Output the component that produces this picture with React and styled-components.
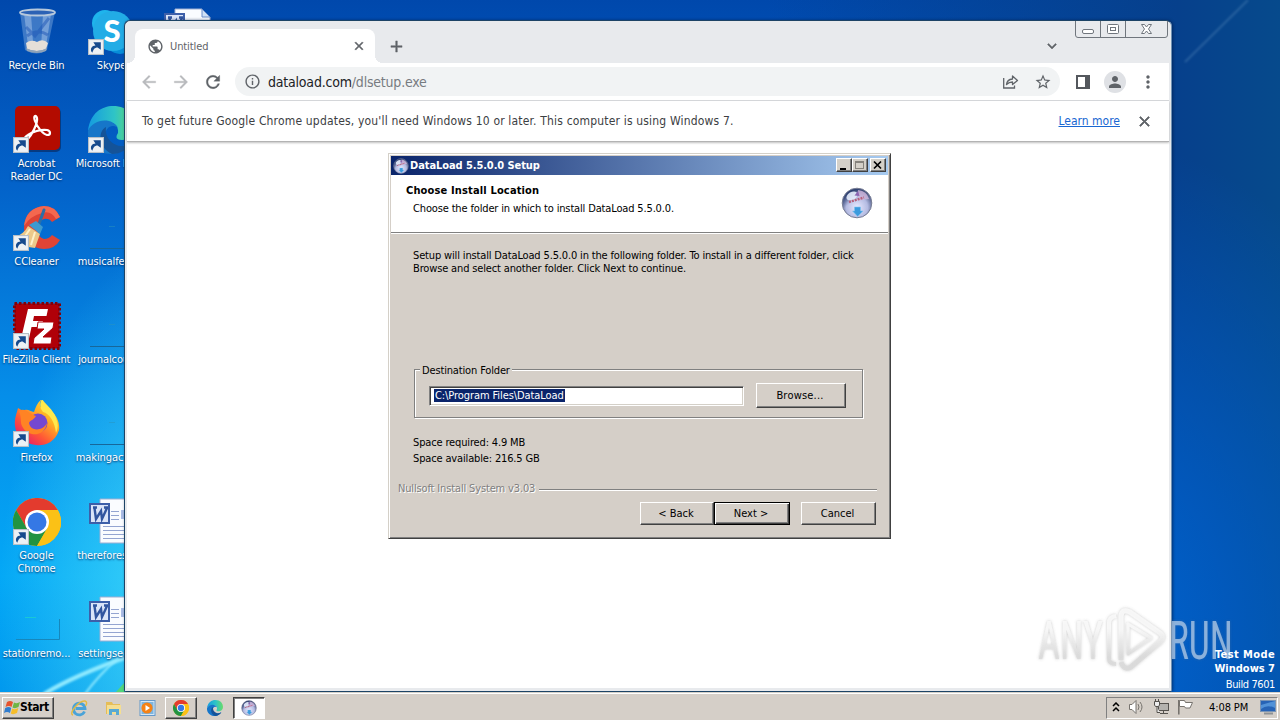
import React from 'react'
import styled, { createGlobalStyle, css } from 'styled-components'
import {
	MdAdd, MdArrowBack, MdArrowForward, MdClose, MdInfoOutline, MdKeyboardArrowDown,
	MdMoreVert, MdPerson, MdPublic, MdRefresh, MdStarBorder,
} from 'react-icons/md'

const desktopItems = [
	{ label: 'Recycle Bin', icon: 'bin' },
	{ label: 'Acrobat Reader DC', icon: 'acrobat', shortcut: true },
	{ label: 'CCleaner', icon: 'ccleaner', shortcut: true },
	{ label: 'FileZilla Client', icon: 'filezilla', shortcut: true },
	{ label: 'Firefox', icon: 'firefox', shortcut: true },
	{ label: 'Google Chrome', icon: 'chrome', shortcut: true },
	{ label: 'stationremo...', icon: 'blank' },
	{ label: 'Skype', icon: 'skype', shortcut: true },
	{ label: 'Microsoft Edge', icon: 'edge', shortcut: true, nowrap: true },
	{ label: 'musicalfesti...', icon: 'line' },
	{ label: 'journalcouri...', icon: 'line' },
	{ label: 'makingactivi...', icon: 'line' },
	{ label: 'thereforesta...', icon: 'word' },
	{ label: 'settingsedit...', icon: 'word' },
	{ label: '', icon: 'word' },
]

function BinIcon() {
	return (
		<svg viewBox='0 0 48 48'>
			<path d='M7 4 L12 42 Q24 49 34 42 L42 4 Z' fill='#6f9fd8' fillOpacity='.55' />
			<path d='M11 5 L15 38 L20 34 L18 6 Z M30 6 L28 40 L33 38 L38 6 Z' fill='#d9e8f8' fillOpacity='.35' />
			<path d='M13 19 L22 28 L36 10 M14 28 Q25 20 35 27' stroke='#1d56b5' strokeOpacity='.5' strokeWidth='3' fill='none' />
			<path d='M13 35 Q18 31 24 34 Q30 30 35 35 L33 41 Q24 45 14 41Z' fill='#e5dfd8' />
			<path d='M13 40 Q24 46 34 40 L33 43 Q24 47 14 43Z' fill='#8fa3b8' />
			<ellipse cx='24.5' cy='4.5' rx='17.5' ry='3' fill='#2c62b5' stroke='#b6c8dc' strokeWidth='1.8' />
		</svg>
	)
}

function AcrobatIcon() {
	return (
		<svg viewBox='0 0 48 48'>
			<rect x='3' y='2' width='45' height='44' rx='5' fill='#063b82' />
			<rect x='2' y='0' width='45' height='44' rx='5' fill='#b30b00' />
			<path d='M14 34 C19 29 25 17 24 12 C23 8 20 10 22 15 C24 21 30 28 34 29 C38 29 38 25 34 24 C28 23 19 26 15 29 C10 32 11 36 14 34Z' fill='none' stroke='#fff' strokeWidth='2.2' />
		</svg>
	)
}

function CCleanerIcon() {
	return (
		<svg viewBox='0 0 48 48'>
			<path d='M47 13 L39 18 Q36 14 31 15 Q24 17 24 26 Q25 33 31 35 Q36 35 39 31 L47 36 Q42 45 31 45 Q12 44 11 24 Q12 4 31 2 Q42 2 47 13Z' fill='#df4435' />
			<path d='M11 22 Q13 4 31 2 Q42 2 47 13 L43 15 Q38 6 29 9 Q17 12 11 22Z' fill='#f4684f' />
			<path d='M31 6 L26 20' stroke='#2a6fa8' strokeWidth='3' strokeLinecap='round' />
			<path d='M16 21 L23 17 L30 23 L27 30Z' fill='#3c9ad0' />
			<path d='M15 22 L27 30 L22 44 Q10 44 2 33 Q11 30 15 22Z' fill='#ecc98a' />
			<path d='M17 25 L10 35 M22 28 L18 41' stroke='#fff1c8' strokeWidth='2' />
		</svg>
	)
}

function FileZillaIcon() {
	return (
		<svg viewBox='0 0 48 48'>
			<rect x='1.5' y='1.5' width='45' height='45' fill='#b00008' stroke='#810008' strokeWidth='3' strokeDasharray='2.5 2' />
			<path d='M15 7 L35 7 L33.5 14 L21 14 L20 19 L30 19 L28.5 25 L18.5 25 L15 41 L7 41Z' fill='#fff' />
			<path d='M25 20 L41 20 L40 26 L30 35 L39 35 L38 42 L20 42 L21 36 L31 27 L24 27Z' fill='#fff' stroke='#b00008' strokeWidth='1' />
		</svg>
	)
}

function FirefoxIcon() {
	return (
		<svg viewBox='0 0 48 48'>
			<defs>
				<linearGradient id='fox' x1='1' y1='0' x2='.2' y2='1'>
					<stop offset='0' stopColor='#fff33f' />
					<stop offset='.4' stopColor='#ffae24' />
					<stop offset='.7' stopColor='#ff5636' />
					<stop offset='1' stopColor='#e51572' />
				</linearGradient>
			</defs>
			<g transform='translate(0 -2)'>
				<path d='M29 1 C25 7 27 9 32 13 L36 11 C44 17 47 25 46 32 C42 45 31 48 23 47 C11 46 3 38 2 28 C1 20 4 15 5 10 L10 13 C14 10 17 13 21 14 C23 8 25 4 29 1Z' fill='url(#fox)' />
				<circle cx='25' cy='25' r='9.5' fill='#7548d0' />
				<path d='M6 13 C12 9 16 16 23 18 C21 22 17 22 16 25 C18 35 31 32 34 25 C32 39 15 40 9 28 C7 24 9 20 6 13Z' fill='#ff8324' />
				<path d='M29 1 C34 8 42 13 44 23 Q46 29 43 35 C42 24 36 15 30 14 Q25 8 29 1Z' fill='#ffe84c' />
			</g>
		</svg>
	)
}

function ChromeIcon() {
	return (
		<svg viewBox='0 0 48 48'>
			<circle cx='24' cy='24' r='24' fill='#fbc116' />
			<path d='M24 12 H44.8 A24 24 0 0 0 3.2 12 L13.5 30Z' fill='#e33b2e' />
			<path d='M3.2 12 L13.6 30 L34.4 30 L24 48 A24 24 0 0 1 3.2 12Z' fill='#229342' />
			<path d='M34.4 30 L24 48 A24 24 0 0 0 44.8 12 H24Z' fill='#fbc116' />
			<circle cx='24' cy='24' r='12' fill='#fff' />
			<circle cx='24' cy='24' r='9.5' fill='#3578e5' />
		</svg>
	)
}

function SkypeIcon() {
	return (
		<svg viewBox='0 0 48 48'>
			<circle cx='17' cy='15' r='13' fill='#1fb4ec' />
			<circle cx='32' cy='31' r='15' fill='#078dd8' />
			<circle cx='25' cy='23' r='20' fill='#22ace6' />
			<text x='15.5' y='34' fontFamily='Lato, sans-serif' fontWeight='900' fontSize='31' fill='#fff'>S</text>
		</svg>
	)
}

function EdgeIcon() {
	return (
		<svg viewBox='0 0 48 48'>
			<defs>
				<linearGradient id='edgeTop' x1='0' x2='1'>
					<stop offset='0' stopColor='#159be0' />
					<stop offset='.55' stopColor='#2fc4c6' />
					<stop offset='1' stopColor='#69dc67' />
				</linearGradient>
			</defs>
			<path d='M0 25 C2 7 14 0 25 0 C40 0 48 10 48 21 C48 29 42 34 34 34 C27 34 28 30 30 27 C31 19 25 16 18 16 C9 16 3 20 0 25Z' fill='url(#edgeTop)' />
			<path d='M0 25 C5 12 25 11 30 22 C22 16 15 25 18 33 C21 41 31 44 43 36 C38 44 31 48 23 48 C8 48 -1 36 0 25Z' fill='#1676c9' />
			<path d='M18 21 C9 26 11 42 24 48 C33 48 40 43 43 37 C32 45 16 36 18 21Z' fill='#145399' />
		</svg>
	)
}

function WordIcon() {
	return (
		<svg viewBox='0 0 48 48'>
			<path d='M12 1 H39 L47 9 V45 H12Z' fill='#fafcff' stroke='#9daed2' />
			<path d='M39 1 V9 H47Z' fill='#cfe0f5' stroke='#6a8cc8' />
			<path d='M23 13.5 H31 M23 17.5 H31 M23 21.5 H31 M15 28.5 H44 M15 32.5 H44 M15 36.5 H44 M15 40.5 H44' stroke='#94a5d1' />
			<rect x='33' y='12' width='10' height='9' fill='#aabce5' />
			<rect x='2' y='6' width='19' height='19' fill='#dae4f8' stroke='#3d5fa9' strokeWidth='2' />
			<path d='M5 9.5 H9 M6.5 10 L8 21 L13 13 L14 21 L19 10 M16 9.5 H20' fill='none' stroke='#31559f' strokeWidth='2.4' />
		</svg>
	)
}

function BlankIcon() {
	return (
		<svg viewBox='0 0 48 48'>
			<path d='M3 43.5 H46.5 V23' fill='none' stroke='#1687bc' />
			<path d='M12 21.5 H23' stroke='#19c8d6' />
		</svg>
	)
}

function LineIcon() {
	return (
		<svg viewBox='0 0 48 48'>
			<path d='M2 44.5 H48' stroke='#17679a' />
			<path d='M21 22.5 H27' stroke='#2a94bc' strokeOpacity='.5' />
		</svg>
	)
}

// glass disc used by the installer title, header and task button
function DiscIcon() {
	return (
		<svg viewBox='0 0 32 32'>
			<defs>
				<radialGradient id='disc' cx='.5' cy='.65' r='.6'>
					<stop offset='0' stopColor='#e8e9ff' />
					<stop offset='.6' stopColor='#b4bbe2' />
					<stop offset='1' stopColor='#414e7b' />
				</radialGradient>
				<linearGradient id='discRim' x1='0' y1='0' x2='.6' y2='.7'>
					<stop offset='0' stopColor='#10295c' />
					<stop offset='.6' stopColor='#25396e' stopOpacity='0' />
				</linearGradient>
			</defs>
			<circle cx='16' cy='16' r='14.8' fill='url(#disc)' stroke='#777d94' />
			<circle cx='16' cy='16' r='14' fill='url(#discRim)' />
			<ellipse cx='11' cy='9' rx='6' ry='4' fill='#e4ebfb' fillOpacity='.9' transform='rotate(-30 11 9)' />
			<path d='M17 3 Q26 4 28 12 Q23 12 17 14Z' fill='#d0b6dc' fillOpacity='.8' />
			<path d='M8 15 L23 10.5' stroke='#b5607b' strokeWidth='2.4' strokeDasharray='2 1' />
			<path d='M13.5 8.5 L17 4 L18.5 9Z' fill='#8b63b0' />
			<path d='M13.5 20 H19.5 V24 H22 L16.7 29.5 L11.5 24 H13.5Z' fill='#3a9add' stroke='#7fc4f0' strokeWidth='.6' />
		</svg>
	)
}

function ShortcutArrow() {
	return (
		<svg viewBox='0 0 15 15'>
			<rect x='.5' y='.5' width='14' height='14' fill='#edf1f5' stroke='#b7bfc7' />
			<path d='M4 13 C1 9 4 6 7 6 L5 3 L12 3 L12 10 L9 8 C6 8 5 10 4 13Z' fill='#164a8d' />
		</svg>
	)
}

const icons = {
	bin: BinIcon, acrobat: AcrobatIcon, ccleaner: CCleanerIcon, filezilla: FileZillaIcon,
	firefox: FirefoxIcon, chrome: ChromeIcon, skype: SkypeIcon, edge: EdgeIcon,
	word: WordIcon, blank: BlankIcon, line: LineIcon,
}

function DesktopItem({ item }) {
	const Icon = icons[item.icon]
	return (
		<Shortcut>
			<ShortcutImage>
				<Icon />
				{item.shortcut && <ArrowBadge><ShortcutArrow /></ArrowBadge>}
			</ShortcutImage>
			<ShortcutLabel $nowrap={item.nowrap}>{item.label}</ShortcutLabel>
		</Shortcut>
	)
}

function Wallpaper() {
	return (
		<WallpaperSvg viewBox='0 0 1280 720' preserveAspectRatio='none'>
			<defs>
				<filter id='soft'><feGaussianBlur stdDeviation='1.2' /></filter>
			</defs>
			<path d='M44 694 Q75 675 130 656' stroke='#8feaff' strokeWidth='4' fill='none' filter='url(#soft)' />
			<path d='M85 694 Q98 676 118 658' stroke='#8feaff' strokeWidth='2' fill='none' filter='url(#soft)' />
			<path d='M116 692 L124 683 V692Z' fill='#51d67b' />
			<path d='M1185 62 L1248 0' stroke='#6694c4' strokeOpacity='.35' strokeWidth='2' filter='url(#soft)' />
		</WallpaperSvg>
	)
}

function Browser() {
	return (
		<BrowserWindow>
			<TabStrip>
				<Tab>
					<MdPublic size={17} />
					<TabTitle>Untitled</TabTitle>
					<Strong><MdClose size={14} /></Strong>
				</Tab>
				<NewTab><MdAdd size={19} /></NewTab>
				<TabSearch><MdKeyboardArrowDown size={18} /></TabSearch>
				<WindowButtons>
					<svg width='93' height='18' viewBox='0 0 93 18' fill='none' stroke='#70767d'>
						<path d='M.5 0 V14 Q.5 16.5 3 16.5 H90 Q92.5 16.5 92.5 14 V0 M25.5 0 V16 M50.5 0 V16' />
						<rect x='7.5' y='8.5' width='11' height='4' rx='1.5' fill='#fff' />
						<rect x='32.5' y='3.5' width='11' height='9' rx='1' fill='#fff' />
						<rect x='35.5' y='6.5' width='5' height='3' />
						<path d='M66.5 3.5 H69.5 L71.5 6 L73.5 3.5 H76.5 L73.5 8 L76.5 12.5 H73.5 L71.5 10 L69.5 12.5 H66.5 L69.5 8Z' fill='#fff' />
					</svg>
				</WindowButtons>
			</TabStrip>
			<Toolbar>
				<NavButton $muted><MdArrowBack size={20} /></NavButton>
				<NavButton $muted><MdArrowForward size={20} /></NavButton>
				<NavButton><MdRefresh size={20} /></NavButton>
				<Omnibox>
					<MdInfoOutline size={17} />
					<Address>dataload.com<span>/dlsetup.exe</span></Address>
					<svg width='17' height='16' viewBox='0 0 17 16' fill='none' stroke='#5f6368' strokeWidth='1.3'>
						<path d='M1.7 4 V14 H12.5 V11.5' />
						<path d='M4.5 10.5 Q5 5.5 10.5 5 V2 L15.5 6.4 L10.5 10.5 V8 Q7 8 4.5 10.5Z' strokeLinejoin='round' />
					</svg>
					<MdStarBorder size={18} />
				</Omnibox>
				<PanelButton>
					<svg width='14' height='14' viewBox='0 0 14 14'><path d='M0 0H14V14H0Z M2 2V12H9V2Z' fill='#54585d' fillRule='evenodd' /></svg>
				</PanelButton>
				<Avatar><MdPerson size={18} /></Avatar>
				<MdMoreVert size={20} />
			</Toolbar>
			<InfoBar>
				<InfoText>To get future Google Chrome updates, you'll need Windows 10 or later. This computer is using Windows 7.</InfoText>
				<LearnMore>Learn more</LearnMore>
				<Strong><MdClose size={17} /></Strong>
			</InfoBar>
			<Page />
		</BrowserWindow>
	)
}

function Installer() {
	return (
		<Dialog>
			<TitleBar>
				<TitleIcon><DiscIcon /></TitleIcon>
				<Title>DataLoad 5.5.0.0 Setup</Title>
				<CaptionButton>
					<svg width='12' height='11' viewBox='0 0 12 11'><path d='M2 9H8' stroke='#000' strokeWidth='2' /></svg>
				</CaptionButton>
				<CaptionButton>
					<svg width='12' height='11' viewBox='0 0 12 11'><rect x='1.5' y='1.5' width='8' height='7' fill='none' stroke='#85827c' /><path d='M1 2H10' stroke='#85827c' strokeWidth='2' /></svg>
				</CaptionButton>
				<CaptionButton $apart>
					<svg width='12' height='11' viewBox='0 0 12 11'><path d='M2 1.5L9 8.5M9 1.5L2 8.5' stroke='#000' strokeWidth='1.7' /></svg>
				</CaptionButton>
			</TitleBar>
			<DialogHeader>
				<div>
					<Heading>Choose Install Location</Heading>
					<SubHeading>Choose the folder in which to install DataLoad 5.5.0.0.</SubHeading>
				</div>
				<HeaderIcon><DiscIcon /></HeaderIcon>
			</DialogHeader>
			<DialogBody>
				<Description>
					<div>Setup will install DataLoad 5.5.0.0 in the following folder. To install in a different folder, click</div>
					<div>Browse and select another folder. Click Next to continue.</div>
				</Description>
				<Group>
					<Legend>Destination Folder</Legend>
					<PathField><Selected>C:\Program Files\DataLoad</Selected></PathField>
					<Button $width={90} $height={25} $spacing='0.2px'>Browse...</Button>
				</Group>
				<Space>
					<div>Space required: 4.9 MB</div>
					<div>Space available: 216.5 GB</div>
				</Space>
				<Branding>Nullsoft Install System v3.03<Rule /></Branding>
				<Actions>
					<Button $width={74} $height={23}>&lt; Back</Button>
					<Button $width={76} $height={23} $primary>Next &gt;</Button>
					<Button $width={75} $height={23} $apart>Cancel</Button>
				</Actions>
			</DialogBody>
		</Dialog>
	)
}

function WindowsLogo() {
	return (
		<svg width='16' height='15' viewBox='0 0 16 15'>
			<path d='M3 2 Q6 0 9 2 L7.5 7 Q5 5 1.5 7Z' fill='#e7532d' />
			<path d='M10 2.5 Q13 4 16 2 L14.5 7 Q11 9 8.5 7.5Z' fill='#70b544' />
			<path d='M1.2 8 Q5 6 7.2 8 L6 13 Q3 11 0 13Z' fill='#317dce' />
			<path d='M8.2 8.5 Q11 10 14.3 8 L13 13 Q9 15 6.8 13.5Z' fill='#f6bd29' />
		</svg>
	)
}

function Taskbar() {
	return (
		<Bar>
			<StartButton><WindowsLogo />Start</StartButton>
			<LaunchItem>
				<svg width='18' height='18' viewBox='0 0 18 18' fill='none'>
					<path d='M14.5 12.5 A5.8 5.8 0 1 1 15 9.5 H5.5' stroke='#4aa3d8' strokeWidth='2.8' />
					<path d='M3 16 C-2 15 9 1 15 2 Q18 3 15.5 7' stroke='#e3ba42' strokeWidth='1.4' />
				</svg>
			</LaunchItem>
			<LaunchItem>
				<svg width='17' height='16' viewBox='0 0 17 16'>
					<path d='M1 2H7L8 4H15V14H1Z' fill='#e5bd56' />
					<path d='M2 5H16V14H2Z' fill='#f5de91' />
					<path d='M4 9H14V15H11V12H7V15H4Z' fill='#59a9d3' />
				</svg>
			</LaunchItem>
			<LaunchItem>
				<svg width='17' height='16' viewBox='0 0 17 16'>
					<rect x='1' y='.5' width='15' height='15' fill='#d4e7f7' stroke='#6599ca' />
					<rect x='2.5' y='2' width='12' height='12' fill='#7db5df' />
					<circle cx='8' cy='8' r='5.6' fill='#f58216' />
					<path d='M6.5 5V11L11 8Z' fill='#fff' />
				</svg>
			</LaunchItem>
			<TaskButton><TaskImage><ChromeIcon /></TaskImage></TaskButton>
			<LaunchItem $wide><TaskImage><EdgeIcon /></TaskImage></LaunchItem>
			<TaskButton $active><TaskImage><DiscIcon /></TaskImage></TaskButton>
			<Tray>
				<svg width='8' height='11' viewBox='0 0 8 11' fill='none' stroke='#000' strokeWidth='1.5'><path d='M1 4L4 1L7 4M1 9L4 6L7 9' /></svg>
				<svg width='17' height='16' viewBox='0 0 17 16' fill='#fff' stroke='#77736e'>
					<path d='M1.5 5.5H4L8 1.5V14.5L4 10.5H1.5Z' />
					<path d='M10 5Q12 8 10 11M12 3Q16 8 12 13' fill='none' />
				</svg>
				<svg width='17' height='16' viewBox='0 0 17 16' fill='#eee' stroke='#55524e'>
					<rect x='5.5' y='4.5' width='10' height='7' fill='#b4b2ae' />
					<path d='M7 14.5H15M10.5 12V14' />
					<path d='M1.5 2.5H6.5V6L5.5 7.5H2.5L1.5 6ZM2.5 2V0M5.5 2V0M4 8V13.5H7' />
				</svg>
				<svg width='17' height='16' viewBox='0 0 17 16' fill='#fff' stroke='#77736e'>
					<path d='M.8 15.5V1' fill='none' strokeWidth='1.6' />
					<path d='M1.5 1.5H6.5L7.5 3.5H14.5L12 9H7.5L6.5 7.5H1.5Z' />
				</svg>
				<Clock>4:08 PM</Clock>
				<svg width='17' height='15' viewBox='0 0 17 15'>
					<rect x='.5' y='.5' width='15' height='11' fill='#2663b6' stroke='#7994b6' />
					<path d='M1 5L15 1V8Q7 4 1 9Z' fill='#5292d8' />
					<path d='M4 13.5H13' stroke='#8d9195' strokeWidth='2' />
				</svg>
			</Tray>
		</Bar>
	)
}

function Watermark() {
	return (
		<WatermarkSvg width='210' height='76' viewBox='0 0 210 76'>
			<defs>
				<filter id='mark' x='-10%' y='-10%' width='120%' height='120%'>
					<feDropShadow dx='0' dy='0' stdDeviation='1.6' floodColor='#777' floodOpacity='.45' />
				</filter>
				<linearGradient id='fade' gradientUnits='userSpaceOnUse' x1='0' y1='8' x2='0' y2='70'>
					<stop offset='.3' stopColor='#fafafa' stopOpacity='.9' />
					<stop offset='.75' stopColor='#dadada' stopOpacity='.85' />
				</linearGradient>
			</defs>
			<g filter='url(#mark)' fontFamily='Roboto, sans-serif' fontSize='53' fontWeight='400'>
				<text x='8' y='57' fill='url(#fade)' textLength='65' lengthAdjust='spacingAndGlyphs'>ANY</text>
				<text x='139' y='57' fill='#cfdff0' fillOpacity='.62' textLength='64' lengthAdjust='spacingAndGlyphs'>RUN</text>
				<g fill='none' stroke='url(#fade)' strokeLinejoin='round'>
					<path d='M86 14 Q79 15 79 21 V57 Q79 62 86 62' strokeWidth='4' />
					<path d='M91 58 V14 Q92 6 100 10 L130 31 Q135 35 130 40 L101 65 Q94 69 91 60' strokeWidth='5' />
					<path d='M98 22 V52 L121 36 Z' strokeWidth='3' />
				</g>
			</g>
		</WatermarkSvg>
	)
}

function App() {
	return (
		<Desktop>
			<GlobalStyle />
			<Wallpaper />
			<ShortcutGrid>
				{desktopItems.map((item, index) => <DesktopItem key={index} item={item} />)}
			</ShortcutGrid>
			<Browser />
			<Installer />
			<Watermark />
			<BuildInfo>
				<b>Test Mode</b>
				<b>Windows 7</b>
				<span>Build 7601</span>
			</BuildInfo>
			<Taskbar />
		</Desktop>
	)
}

export default App

// the Material icons carry an empty bounding path that must stay unstroked
const thicker = width => css`
	svg path:not([fill='none']) {
		stroke: currentColor;
		stroke-width: ${width};
	}
`
const GlobalStyle = createGlobalStyle`
	* {
		box-sizing: border-box;
	}
	body {
		margin: 0;
		overflow: hidden;
		font-family: Tahoma, 'DejaVu Sans Condensed', 'DejaVu Sans', sans-serif;
		font-stretch: condensed;
		font-size: 11px;
		color: #000;
	}
	svg {
		display: block;
		flex-shrink: 0;
	}
`
const Desktop = styled.main`
	position: relative;
	display: flex;
	flex-direction: column;
	justify-content: space-between;
	width: 1280px;
	height: 720px;
	overflow: hidden;
	background:
		radial-gradient(ellipse 240px 480px at 190px 620px, rgba(90, 235, 250, 0.75), transparent 80%),
		radial-gradient(ellipse 420px 560px at 1080px 640px, rgba(0, 106, 218, 0.95), rgba(0, 96, 204, 0.75) 35%, transparent 90%),
		linear-gradient(90deg, transparent 60%, #06408c 92%, #064a8c 100%),
		linear-gradient(180deg, #0048ac 0%, #0363ca 26%, #058ee9 55%, #04a8f6 80%, #0095ec 100%);
`
const WallpaperSvg = styled.svg`
	position: absolute;
	inset: 0;
	width: 1280px;
	height: 720px;
`
const ShortcutGrid = styled.div`
	display: grid;
	grid-template-rows: repeat(7, 98px);
	grid-auto-columns: 75px;
	grid-auto-flow: column;
	height: 692px;
	margin-left: -1px;
`
const Shortcut = styled.div`
	position: relative;
	display: flex;
	flex-direction: column;
	align-items: center;
	padding: 8px 1px 0;
	gap: 3px;
`
const ShortcutImage = styled.div`
	position: relative;
	width: 48px;
	height: 48px;
`
const ArrowBadge = styled.div`
	position: absolute;
	left: 0;
	bottom: 1px;
	width: 16px;
`
const ShortcutLabel = styled.div`
	color: white;
	line-height: 13px;
	letter-spacing: -0.1px;
	text-align: center;
	text-shadow: 0 1px 2px #00306b;
	white-space: ${({ $nowrap }) => ($nowrap ? 'nowrap' : 'normal')};
`
const BrowserWindow = styled.section`
	position: absolute;
	left: 124px;
	top: 20px;
	width: 1048px;
	height: 672px;
	display: flex;
	flex-direction: column;
	padding: 0 2px 3px;
	background: #e8eaed;
	border: 1px solid #1d4466;
	border-right-color: #6f91b3;
	border-radius: 6px 6px 2px 2px;
	box-shadow: 1px 0 3px rgba(0, 25, 70, 0.6);
	color: #5f6368;
`
const TabStrip = styled.div`
	display: flex;
	height: 42px;
	padding-left: 8px;
	align-items: flex-end;
`
const Tab = styled.div`
	position: relative;
	display: flex;
	align-items: center;
	width: 240px;
	height: 34px;
	padding: 0 9px 0 12px;
	background: white;
	border-radius: 8px 8px 0 0;
	&::before, &::after {
		content: '';
		position: absolute;
		bottom: 0;
		width: 8px;
		height: 8px;
	}
	&::before {
		left: -8px;
		background: radial-gradient(circle at 0 0, transparent 8px, white 8px);
	}
	&::after {
		right: -8px;
		background: radial-gradient(circle at 100% 0, transparent 8px, white 8px);
	}
`
const TabTitle = styled.div`
	flex: 1;
	padding-left: 6px;
	font-size: 11px;
	letter-spacing: -0.1px;
`
const Strong = styled.div`
	${thicker(1)}
`
const NewTab = styled.div`
	display: flex;
	align-items: center;
	height: 34px;
	margin-left: 12px;
	${thicker(0.6)}
`
const TabSearch = styled.div`
	display: flex;
	align-items: center;
	height: 34px;
	margin-left: auto;
	${thicker(0.6)}
`
const WindowButtons = styled.div`
	align-self: flex-start;
	margin-left: 14px;
	margin-right: 1px;
`
const Toolbar = styled.div`
	display: flex;
	align-items: center;
	height: 38px;
	padding: 0 11px 0 12px;
	background: white;
	border-bottom: 1px solid #d8dadd;
`
const NavButton = styled.div`
	display: flex;
	width: 32px;
	color: ${({ $muted }) => ($muted ? '#b8babd' : '#5f6368')};
	${thicker(0.4)}
`
const Omnibox = styled.div`
	display: flex;
	align-items: center;
	flex-shrink: 0;
	width: 825px;
	height: 29px;
	padding: 0 8px 0 9px;
	background: #f1f3f4;
	border-radius: 15px;
	svg + svg {
		margin-left: 15px;
	}
`
const Address = styled.div`
	flex: 1;
	padding-left: 7px;
	color: #202124;
	font-size: 14px;
	letter-spacing: -0.2px;
	span {
		color: #777b80;
	}
`
const PanelButton = styled.div`
	margin-left: 16px;
`
const Avatar = styled.div`
	display: flex;
	align-items: center;
	justify-content: center;
	width: 22px;
	height: 22px;
	margin: 0 12px 0 14px;
	border-radius: 50%;
	background: #dfe1e5;
`
const InfoBar = styled.div`
	display: flex;
	align-items: center;
	height: 41px;
	padding: 0 16px 0 15px;
	background: white;
	border-bottom: 1px solid #b3b3b3;
	box-shadow: 0 1px 2px rgba(0, 0, 0, 0.25);
	z-index: 1;
`
const InfoText = styled.div`
	flex: 1;
	font-size: 12px;
	letter-spacing: 0.175px;
	color: #3c4043;
`
const LearnMore = styled.a`
	margin-right: 16px;
	color: #1967d2;
	font-size: 12px;
	text-decoration: underline;
`
const Page = styled.div`
	flex: 1;
	background: white;
`
const Dialog = styled.section`
	position: absolute;
	left: 388px;
	top: 153px;
	width: 503px;
	height: 386px;
	display: flex;
	flex-direction: column;
	padding: 1px;
	background: #d5cfc8;
	border: 1px solid;
	border-color: #d4d0c8 #404040 #404040 #d4d0c8;
	box-shadow: inset 1px 1px #fff, inset -1px -1px #808080;
	letter-spacing: -0.15px;
`
const TitleBar = styled.div`
	display: flex;
	align-items: center;
	height: 19px;
	margin: 1px 1px 0;
	padding: 0 2px;
	background: linear-gradient(90deg, #0a246a, #a6caf0);
`
const TitleIcon = styled.div`
	width: 16px;
`
const Title = styled.div`
	flex: 1;
	padding: 0 0 1px 1px;
	color: white;
	font-weight: bold;
	letter-spacing: -0.08px;
`
const CaptionButton = styled.div`
	width: 16px;
	height: 14px;
	padding: 1px;
	margin-left: ${({ $apart }) => ($apart ? '2px' : '0')};
	margin-bottom: 1px;
	background: #d4d0c8;
	border: 1px solid;
	border-color: #fff #404040 #404040 #fff;
	box-shadow: inset -1px -1px #808080;
`
const DialogHeader = styled.div`
	display: flex;
	justify-content: space-between;
	height: 58px;
	margin: 0 1px;
	padding: 9px 15px 0;
	background: white;
	border-bottom: 1px solid #808080;
`
const Heading = styled.div`
	font-weight: bold;
	line-height: 13px;
	letter-spacing: 0.15px;
`
const SubHeading = styled.div`
	padding: 5px 0 0 7px;
	line-height: 13px;
`
const HeaderIcon = styled.div`
	width: 32px;
	padding-top: 3px;
`
const DialogBody = styled.div`
	flex: 1;
	display: flex;
	flex-direction: column;
	margin: 0 1px 0 1px;
	padding: 15px 11px 0 7px;
	border-top: 1px solid #fff;
`
const Description = styled.div`
	height: 120px;
	padding-left: 15px;
	line-height: 13px;
	white-space: nowrap;
`
const Group = styled.div`
	position: relative;
	display: flex;
	align-items: center;
	justify-content: space-between;
	width: 449px;
	height: 49px;
	margin-left: 16px;
	padding: 4px 16px 0 14px;
	border: 1px solid #808080;
	box-shadow: inset 1px 1px #fff, 1px 1px #fff;
`
const Legend = styled.div`
	position: absolute;
	left: 5px;
	top: -6px;
	padding: 0 2px;
	line-height: 13px;
	background: #d5cfc8;
`
const PathField = styled.div`
	width: 315px;
	height: 20px;
	margin-top: 1px;
	padding: 2px 4px;
	background: white;
	border: 1px solid;
	border-color: #808080 #fff #fff #808080;
	box-shadow: inset 1px 1px #404040, inset -1px -1px #d4d0c8;
`
const Selected = styled.span`
	display: inline-block;
	padding: 0 1px;
	line-height: 13px;
	letter-spacing: -0.08px;
	color: white;
	background: #0a246a;
`
const Button = styled.div`
	display: flex;
	align-items: center;
	justify-content: center;
	width: ${({ $width }) => $width}px;
	height: ${({ $height }) => $height}px;
	padding: 0 2px 1px 0;
	margin-left: ${({ $apart }) => ($apart ? '11px' : '0')};
	letter-spacing: ${({ $spacing = '0' }) => $spacing};
	background: #d5cfc8;
	border: 1px solid;
	border-color: #fff #404040 #404040 #fff;
	box-shadow: inset -1px -1px #808080;
	${({ $primary }) => $primary && css`
		border-color: #000;
		box-shadow: inset 1px 1px #fff, inset -1px -1px #404040, inset -2px -2px #808080;
	`}
`
const Space = styled.div`
	padding: 17px 0 0 15px;
	line-height: 16px;
`
const Branding = styled.div`
	display: flex;
	align-items: center;
	gap: 4px;
	margin-top: 15px;
	line-height: 13px;
	color: #808080;
	text-shadow: 1px 1px #fff;
`
const Rule = styled.div`
	flex: 1;
	height: 2px;
	margin-top: 2px;
	border-top: 1px solid #808080;
	border-bottom: 1px solid #fff;
`
const Actions = styled.div`
	display: flex;
	justify-content: flex-end;
	padding-top: 7px;
	margin-right: 1px;
`
const WatermarkSvg = styled.svg`
	position: absolute;
	left: 1030px;
	top: 602px;
`
const BuildInfo = styled.div`
	position: absolute;
	right: 5px;
	bottom: 26px;
	display: flex;
	flex-direction: column;
	align-items: flex-end;
	line-height: 14px;
	color: white;
	b:first-child {
		letter-spacing: 0.4px;
	}
	span {
		line-height: 18px;
		letter-spacing: -0.4px;
	}
`
const Bar = styled.footer`
	position: relative;
	display: flex;
	align-items: center;
	height: 28px;
	padding: 2px 2px 0;
	background: #d5cfc8;
	border-top: 1px solid #d4d0c8;
	box-shadow: inset 0 1px #fff;
`
const StartButton = styled.div`
	display: flex;
	align-items: center;
	width: 52px;
	height: 22px;
	margin-right: 8px;
	padding: 0 0 1px 1px;
	font-weight: bold;
	font-size: 12px;
	letter-spacing: -0.4px;
	border: 1px solid;
	border-color: #fff #404040 #404040 #fff;
	box-shadow: inset -1px -1px #808080;
`
const LaunchItem = styled.div`
	display: flex;
	justify-content: center;
	width: ${({ $wide }) => ($wide ? '36px' : '34px')};
`
const TaskButton = styled.div`
	display: flex;
	align-items: center;
	justify-content: center;
	width: 32px;
	height: 22px;
	margin-left: ${({ $active }) => ($active ? '0' : '1px')};
	background: ${({ $active }) => ($active ? '#fff' : '#d5cfc8')};
	border: 1px solid;
	border-color: ${({ $active }) => ($active ? '#404040 #fff #fff #404040' : '#fff #404040 #404040 #fff')};
	box-shadow: ${({ $active }) => ($active ? 'inset 1px 1px #808080' : 'inset -1px -1px #808080')};
`
const TaskImage = styled.div`
	width: 16px;
`
const Tray = styled.div`
	display: flex;
	align-items: center;
	gap: 8px;
	width: 172px;
	height: 22px;
	margin-left: auto;
	padding: 0 0 1px 5px;
	border: 1px solid;
	border-color: #808080 #fff #fff #808080;
`
const Clock = styled.div`
	flex: 1;
	padding-left: 6px;
	letter-spacing: -0.1px;
	white-space: nowrap;
`
